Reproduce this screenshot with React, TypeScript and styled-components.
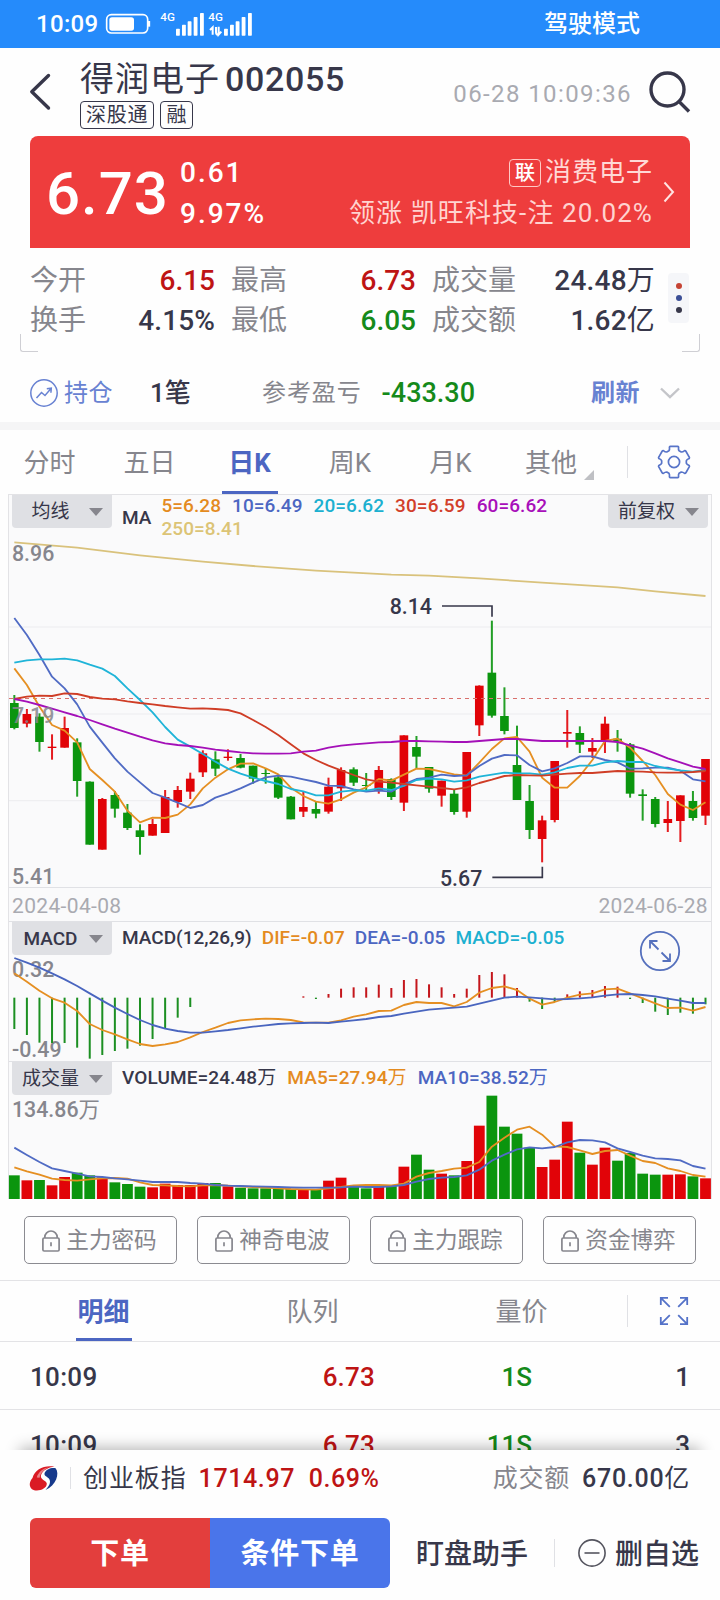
import React from "react";
import styled, { createGlobalStyle, css } from "styled-components";

const INK = "#37374a";
const GRAY = "#86868d";
const PALE = "#a9aab1";
const BLUE = "#4c66c2";
const SOFT_BLUE = "#6882d2";
const RED = "#be1414";
const GREEN = "#158a1a";
const UP = "#e10308";
const DOWN = "#0b950e";
const ORANGE = "#e48b1f";
const CYAN = "#1cb0d0";
const LINE = "#e3e3e6";
const MEDIUM = 480;

const Global = createGlobalStyle`
  * { box-sizing: border-box; }
  html, body { margin: 0; padding: 0; background: #fefefe; }
  body {
    width: 720px;
    height: 1600px;
    overflow: hidden;
    font-family: Roboto, "Noto Sans CJK SC", sans-serif;
    color: ${INK};
  }
  svg { display: block; overflow: visible; }
`;

interface TypeProps {
  $size: number;
  $weight?: number;
  $color?: string;
  $gap?: number;
}
const type = css<TypeProps>`
  font-size: ${(p) => p.$size}px;
  font-weight: ${(p) => p.$weight ?? 400};
  color: ${(p) => p.$color ?? INK};
  letter-spacing: ${(p) => p.$gap ?? 0}px;
  white-space: pre;
`;
const Label = styled.span<TypeProps>`
  ${type}
  line-height: 1.4;
`;
const Unit = styled.span`
  font-weight: 400;
`;

const Screen = styled.main`
  display: flex;
  flex-direction: column;
  width: 720px;
  height: 1600px;
  overflow: hidden;
`;

/* ---------- status bar ---------- */
const StatusBar = styled.header`
  display: flex;
  align-items: center;
  flex: none;
  height: 48px;
  padding: 2px 80px 0 36px;
  background: #258bfb;
`;
const StatusGlyphs = styled.svg`
  margin: 0 auto 2px 7px;
`;

/* ---------- title ---------- */
const TitleBar = styled.section`
  display: flex;
  flex: none;
  height: 88px;
  padding: 0 30px;
`;
const BackIcon = styled.svg`
  margin-top: 25px;
`;
const TitleBlock = styled.div`
  display: flex;
  flex-direction: column;
  margin-left: 28px;
  padding-top: 9px;
`;
const Name = styled.h1`
  display: flex;
  gap: 5px;
  margin: 0;
  height: 44px;
  line-height: 44px;
  font-size: 34px;
  letter-spacing: 1px;
  font-weight: 400;
`;
const Code = styled.span`
  font-weight: ${MEDIUM};
  letter-spacing: 0.7px;
`;
const Tags = styled.div`
  display: flex;
  gap: 6px;
`;
const Tag = styled.span<{ $light?: boolean }>`
  height: 28px;
  padding: 0 5px;
  border: 1px solid ${(p) => (p.$light ? "#ffc9c5" : INK)};
  border-radius: 4px;
  font-size: 20px;
  font-weight: ${(p) => (p.$light ? 500 : 400)};
  color: ${(p) => (p.$light ? "#fff" : INK)};
  line-height: 26px;
  letter-spacing: ${(p) => (p.$light ? 0 : 0.8)}px;
`;
const Stamp = styled.time`
  ${type}
  margin-left: auto;
  margin-right: 17px;
  line-height: 92px;
`;
const SearchIcon = styled.svg`
  margin-top: 23px;
`;

/* ---------- quote card ---------- */
const QuoteCard = styled.section`
  display: flex;
  align-items: center;
  flex: none;
  height: 112px;
  margin: 0 30px;
  padding: 0 15px 0 16px;
  border-radius: 8px 8px 0 0;
  background: #ee3d3d;
  color: #fff;
`;
const Price = styled.strong`
  width: 134px;
  font-size: 60px;
  font-weight: 500;
  line-height: 60px;
  letter-spacing: 1px;
  padding-top: 4px;
`;
const Stack = styled.div<{ $end?: boolean }>`
  display: flex;
  flex-direction: column;
  padding-top: 2px;
  align-items: ${(p) => (p.$end ? "flex-end" : "flex-start")};
  margin-left: ${(p) => (p.$end ? "auto" : "0")};
  margin-right: ${(p) => (p.$end ? "10px" : "0")};
`;
const StackLine = styled.div<TypeProps>`
  ${type}
  display: flex;
  align-items: center;
  gap: 4px;
  height: 41px;
  line-height: 41px;
`;
const Percent = styled.span`
  font-weight: 440;
`;

/* ---------- stats ---------- */
const Stats = styled.section`
  display: flex;
  position: relative;
  flex: none;
  height: 104px;
  margin: 0 20px;
  padding: 12px 10px 0;
`;
const StatGrid = styled.dl`
  display: grid;
  grid-template-columns: 185px 16px 185px 16px 223px;
  grid-template-rows: 40px 40px;
  margin: 0;
  padding-top: 1px;
`;
const Stat = styled.div<{ $col: number }>`
  grid-column: ${(p) => p.$col};
  display: flex;
  justify-content: space-between;
  align-items: center;
  line-height: 40px;
`;
const Corner = styled.i<{ $right?: boolean }>`
  position: absolute;
  bottom: 0;
  ${(p) => (p.$right ? "right: 0; border-right: 1.5px solid #cfcfd4; border-bottom-right-radius: 3px;" : "left: 0; border-left: 1.5px solid #cfcfd4; border-bottom-left-radius: 3px;")}
  width: 18px;
  height: 18px;
  border-bottom: 1.5px solid #cfcfd4;
`;
const MorePill = styled.div`
  display: flex;
  flex-direction: column;
  align-items: center;
  justify-content: center;
  gap: 6px;
  width: 21px;
  height: 50px;
  margin: 13px 0 0 13px;
  border-radius: 4px;
  background: #f5f6f9;
`;
const Dot = styled.i<{ $c: string }>`
  width: 6px;
  height: 6px;
  border-radius: 50%;
  background: ${(p) => p.$c};
`;

/* ---------- holding row ---------- */
const Holding = styled.section`
  display: flex;
  align-items: center;
  flex: none;
  height: 70px;
  padding: 11px 40px 0 30px;
  & span { padding-top: 2px; }
`;
const HoldLink = styled.div`
  display: flex;
  align-items: center;
  gap: 6px;
  width: 120px;
`;
const HoldCount = styled.div`
  display: flex;
  width: 112px;
`;
const HoldProfit = styled.div`
  display: flex;
  align-items: center;
  gap: 20px;
`;
const HoldRefresh = styled.div`
  display: flex;
  align-items: center;
  gap: 20px;
  margin-left: auto;
`;
const Divider = styled.hr`
  flex: none;
  width: 100%;
  height: 8px;
  margin: 0;
  border: 0;
  background: #f5f5f6;
`;

/* ---------- tabs ---------- */
const TabBar = styled.nav<{ $h: number; $lined?: boolean }>`
  display: flex;
  flex: none;
  height: ${(p) => p.$h}px;
  ${(p) => p.$lined && `border-top: 1px solid ${LINE}; border-bottom: 1px solid ${LINE};`}
`;
const Tab = styled.div<{ $w: number; $on?: boolean }>`
  position: relative;
  display: flex;
  justify-content: center;
  align-items: center;
  width: ${(p) => p.$w}px;
  padding: 0 2px 4px 0;
  font-size: 26px;
  color: ${(p) => (p.$on ? BLUE : GRAY)};
  font-weight: ${(p) => (p.$on ? 700 : 400)};
  &::after {
    content: "";
    display: ${(p) => (p.$on ? "block" : "none")};
    position: absolute;
    bottom: 0;
    left: calc(50% - 28.5px);
    width: 56px;
    height: 3px;
    background: ${BLUE};
  }
`;
const MoreMark = styled.i`
  position: absolute;
  right: 8px;
  bottom: 14px;
  border-left: 10px solid transparent;
  border-bottom: 10px solid #bfc0c4;
`;
const TabTool = styled.div`
  display: flex;
  align-items: center;
  justify-content: center;
  flex: 1;
`;
const ToolRule = styled.i<{ $h: number; $m?: string }>`
  flex: none;
  align-self: center;
  width: 1px;
  height: ${(p) => p.$h}px;
  margin: ${(p) => p.$m ?? "0"};
  background: #e0e1e5;
`;

/* ---------- charts ---------- */
const ChartBox = styled.section`
  flex: none;
  height: 705px;
  margin: 0 8px;
  border: solid ${LINE};
  border-width: 1px 1px 0;
  background: #fafafb;
`;
const Panel = styled.div<{ $h: number }>`
  position: relative;
  height: ${(p) => p.$h}px;
  border-bottom: 1px solid #e0e1e5;
  &:last-child { border-bottom: 0; }
`;
const PanelHead = styled.div<{ $h: number }>`
  display: flex;
  align-items: flex-start;
  height: ${(p) => p.$h}px;
  padding: 0 3px;
`;
const Picker = styled.button<{ $latin?: boolean }>`
  display: flex;
  align-items: center;
  justify-content: space-between;
  flex: none;
  width: 100px;
  height: 33px;
  margin: 0;
  padding: 0 9px 0 0;
  border: 0;
  border-radius: 0 0 4px 4px;
  background: #dfe0e4;
  color: ${INK};
  font: ${(p) => (p.$latin ? 460 : 400)} 19px/34px Roboto, "Noto Sans CJK SC", sans-serif;
  & > span { flex: 1; text-align: center; white-space: nowrap; }
`;
const Caret = styled.i`
  border: 7.5px solid transparent;
  border-top: 8px solid ${GRAY};
  border-bottom: 0;
`;
const Legend = styled.div<{ $wide?: boolean }>`
  display: flex;
  gap: ${(p) => (p.$wide ? 11 : 10)}px;
  margin-left: 10px;
  font-size: 19px;
  font-weight: ${MEDIUM};
  letter-spacing: ${(p) => (p.$wide ? 0.1 : 0)}px;
  line-height: 32px;
`;
const MaTitle = styled.b`
  margin: 7px 10px 0 10px;
  font-size: 19px;
  font-weight: ${MEDIUM};
  line-height: 31px;
`;
const MaLegend = styled.div`
  display: flex;
  flex-wrap: wrap;
  column-gap: 11px;
  flex: 1;
  margin-top: -1px;
  font-size: 19px;
  font-weight: ${MEDIUM};
  letter-spacing: 0.08px;
  line-height: 23px;
`;
const Key = styled.span<{ $c: string }>`
  color: ${(p) => p.$c};
  white-space: nowrap;
`;
const DateRow = styled.div`
  display: flex;
  justify-content: space-between;
  align-items: center;
  height: 34px;
  padding: 4px 3px 0;
  border-bottom: 1px solid #e0e1e5;
`;
const ExpandButton = styled.svg`
  position: absolute;
  top: 8px;
  right: 30px;
`;
const AxisText = styled.text<{ $dark?: boolean }>`
  font: ${(p) => (p.$dark ? MEDIUM : 460)} 64px Roboto, "Noto Sans CJK SC", sans-serif;
  fill: ${(p) => (p.$dark ? INK : GRAY)};
`;

/* ---------- locked indicators ---------- */
const LockRow = styled.section`
  display: grid;
  grid-template-columns: repeat(4, 1fr);
  gap: 20px;
  flex: none;
  height: 81px;
  padding: 17px 24px 16px;
`;
const LockButton = styled.button`
  display: flex;
  align-items: center;
  justify-content: center;
  gap: 6px;
  padding: 1px 2px 0 0;
  border: 1px solid #8b8b91;
  border-radius: 5px;
  background: transparent;
  color: ${GRAY};
  font: 400 22.6px/42px Roboto, "Noto Sans CJK SC", sans-serif;
`;

/* ---------- trades ---------- */
const Trades = styled.section`
  flex: none;
  height: 108px;
  overflow: hidden;
`;
const Trade = styled.div`
  display: grid;
  grid-template-columns: 130px 215px 157px 158px;
  height: 68px;
  padding: 0 30px;
  border-bottom: 1px solid ${LINE};
  line-height: 70px;
  & > :nth-child(n + 2) { text-align: right; }
`;
const TradeCell = styled.span<TypeProps>`
  ${type}
`;

/* ---------- footer ---------- */
const Footer = styled.footer`
  position: relative;
  flex: 1;
  background: #fefefe;
  box-shadow: 0 -22px 14px -20px rgba(0, 0, 0, 0.3);
`;
const IndexRow = styled.div`
  display: flex;
  align-items: center;
  height: 56px;
  padding: 0 30px;
`;
const IndexName = styled.div`
  margin: 0 12px 0 12px;
`;
const IndexMoney = styled.div`
  display: flex;
  gap: 12px;
  margin-left: auto;
`;
const Actions = styled.div`
  display: flex;
  align-items: center;
  height: 70px;
  margin-top: 12px;
  padding: 0 20px 0 30px;
`;
const Order = styled.button<{ $bg: string; $r: string }>`
  flex: none;
  width: 180px;
  height: 70px;
  padding: 2px 0 0;
  border: 0;
  border-radius: ${(p) => p.$r};
  background: ${(p) => p.$bg};
  color: #fff;
  font: 700 29px/68px Roboto, "Noto Sans CJK SC", sans-serif;
  letter-spacing: 0.8px;
`;
const ActionLink = styled.div<{ $first?: boolean }>`
  display: flex;
  align-items: center;
  flex: none;
  gap: 9px;
  margin-left: ${(p) => (p.$first ? 26 : 0)}px;
  & span { padding-top: 3px; }
`;

/* ---------- chart data: three chart units per pixel ---------- */
const STEP = 37.7;
const X0 = 43;
const xAt = (i: number) => X0 + i * STEP;
const points = (ys: number[]) => ys.map((y, i) => `${xAt(i).toFixed(1)},${y}`).join(" ");

// [colour, body top, body bottom, wick top, wick bottom]
type Candle = [string, number, number, number, number];
const candles: Candle[] = [
  ["g", 669, 744, 645, 748], ["r", 702, 731, 687, 742], ["g", 710, 786, 700, 815], ["r", 800, 804, 763, 839],
  ["r", 744, 803, 710, 803], ["g", 787, 903, 775, 950], ["g", 905, 1094, 904, 1094], ["r", 957, 1109, 954, 1109],
  ["g", 945, 986, 933, 1013], ["g", 998, 1044, 972, 1050], ["g", 1051, 1071, 1033, 1124], ["r", 1032, 1067, 1017, 1067],
  ["r", 951, 1059, 930, 1059], ["r", 930, 966, 918, 983], ["r", 896, 935, 878, 957], ["r", 820, 877, 811, 891],
  ["g", 838, 866, 814, 888], ["r", 830, 834, 808, 842], ["g", 834, 863, 822, 865], ["g", 857, 896, 857, 911],
  ["g", 879, 882, 865, 911], ["g", 892, 953, 887, 957], ["g", 950, 1018, 948, 1018], ["r", 981, 995, 933, 1011],
  ["g", 987, 1001, 965, 1015], ["r", 920, 995, 893, 1001], ["r", 870, 925, 862, 963], ["g", 868, 908, 862, 918],
  ["g", 915, 918, 879, 930], ["r", 870, 933, 858, 941], ["g", 897, 951, 895, 960], ["r", 766, 968, 766, 993],
  ["g", 801, 830, 768, 865], ["g", 861, 926, 861, 938], ["r", 902, 947, 902, 980], ["g", 941, 996, 930, 1004],
  ["r", 816, 995, 816, 1013], ["r", 617, 736, 616, 768], ["g", 578, 707, 422, 713], ["g", 708, 753, 622, 763],
  ["g", 855, 960, 737, 960], ["g", 963, 1050, 915, 1077], ["r", 1021, 1077, 1007, 1147], ["r", 843, 1020, 843, 1027],
  ["r", 756, 761, 690, 803], ["g", 759, 794, 739, 819], ["r", 804, 815, 774, 834], ["r", 731, 785, 710, 819],
  ["g", 776, 784, 750, 815], ["g", 793, 941, 789, 953], ["g", 943, 948, 928, 1022], ["g", 957, 1032, 951, 1042],
  ["r", 1017, 1029, 963, 1056], ["r", 946, 1023, 946, 1086], ["g", 963, 1014, 933, 1022], ["r", 837, 1007, 837, 1035],
];

const ma5 = [565, 615, 680, 735, 752, 787, 867, 900, 935, 992, 1027, 1013, 1014, 1004, 973, 925, 893, 868, 851, 850, 865, 883, 923, 948, 965, 971, 958, 938, 922, 897, 902, 884, 866, 867, 875, 883, 887, 848, 807, 775, 771, 815, 893, 923, 923, 888, 840, 783, 776, 803, 843, 885, 942, 974, 990, 967];
const ma10 = [414, 465, 525, 590, 625, 673, 740, 788, 835, 875, 907, 939, 953, 968, 984, 975, 953, 940, 925, 908, 892, 887, 890, 898, 906, 917, 918, 928, 935, 932, 935, 913, 897, 893, 884, 888, 886, 858, 836, 825, 826, 855, 874, 865, 849, 829, 829, 840, 847, 866, 865, 863, 863, 872, 898, 904];
const ma20 = [548, 541, 538, 538, 536, 541, 554, 566, 588, 625, 660, 697, 741, 779, 800, 822, 845, 866, 881, 893, 903, 912, 927, 934, 946, 946, 935, 931, 932, 925, 930, 918, 900, 896, 898, 905, 901, 890, 884, 878, 880, 880, 884, 877, 864, 857, 857, 847, 843, 846, 846, 858, 866, 871, 875, 870];
const ma30 = [657, 650, 647, 648, 640, 642, 651, 656, 658, 664, 669, 673, 678, 682, 686, 685, 687, 690, 700, 720, 741, 765, 793, 820, 840, 857, 871, 885, 898, 905, 908, 912, 916, 920, 924, 928, 922, 909, 899, 888, 885, 886, 887, 884, 881, 879, 879, 876, 873, 874, 875, 877, 878, 878, 876, 873];
const ma60 = [657, 665, 675, 686, 697, 708, 720, 733, 746, 758, 770, 781, 790, 795, 798, 803, 809, 813, 817, 820, 821, 821, 820, 815, 812, 803, 797, 793, 790, 787, 786, 783, 783, 784, 785, 786, 786, 783, 780, 777, 777, 780, 783, 783, 783, 783, 783, 783, 786, 796, 806, 820, 835, 847, 860, 867];
const ma250: [number, number][] = [[0, 187], [5, 203], [10, 226], [15, 245], [19, 258], [24, 272], [30, 284], [33, 287], [37, 295], [42, 308], [48, 322], [51, 334], [55, 348]];

const MACD_ZERO = 263;
const macdBars: [number, string, number][] = [
  [0, "g", 357], [1, "g", 375], [2, "g", 398], [3, "g", 399], [4, "g", 399], [5, "g", 413], [6, "g", 446], [7, "g", 435],
  [8, "g", 423], [9, "g", 416], [10, "g", 407], [11, "g", 387], [12, "g", 356], [13, "g", 323], [14, "g", 291],
  [23, "r", 259], [24, "g", 267], [25, "r", 252], [26, "r", 236], [27, "r", 232], [28, "r", 232], [29, "r", 224],
  [30, "r", 234], [31, "r", 210], [32, "r", 207], [33, "r", 223], [34, "r", 232], [35, "r", 252], [36, "r", 236],
  [37, "r", 195], [38, "r", 186], [39, "r", 193], [40, "r", 234], [41, "g", 275], [42, "g", 297], [43, "g", 276],
  [44, "r", 253], [45, "r", 244], [46, "r", 240], [47, "r", 228], [48, "r", 230], [49, "g", 267], [50, "g", 279],
  [51, "g", 305], [52, "g", 315], [53, "g", 308], [54, "g", 311], [55, "g", 283],
];
const dif = [190, 215, 242, 265, 278, 303, 342, 360, 373, 388, 402, 408, 403, 396, 382, 366, 353, 339, 331, 328, 326, 327, 330, 337, 338, 338, 331, 320, 313, 303, 302, 285, 276, 279, 279, 289, 276, 248, 234, 229, 240, 266, 284, 276, 263, 254, 250, 238, 236, 250, 265, 280, 294, 293, 302, 291];
const dea = [144, 158, 173, 190, 208, 228, 250, 272, 293, 312, 330, 345, 356, 363, 368, 368, 364, 360, 355, 350, 346, 342, 340, 339, 338, 339, 335, 331, 327, 321, 318, 311, 305, 299, 296, 293, 290, 281, 272, 263, 260, 262, 265, 268, 267, 265, 262, 257, 253, 252, 255, 259, 266, 272, 279, 279];

const VOL_BASE = 868;
const volumes = [797, 812, 811, 827, 802, 789, 797, 803, 818, 823, 831, 833, 822, 826, 826, 820, 820, 830, 834, 836, 836, 836, 838, 838, 841, 813, 804, 832, 836, 828, 828, 771, 735, 780, 792, 797, 754, 648, 558, 651, 672, 714, 772, 750, 636, 729, 765, 714, 753, 730, 792, 795, 795, 794, 800, 806];
const volMa5 = [773, 785, 795, 807, 811, 813, 809, 806, 805, 807, 818, 826, 827, 829, 830, 827, 826, 828, 830, 832, 834, 836, 838, 839, 840, 836, 832, 827, 826, 826, 827, 822, 801, 790, 784, 777, 774, 757, 711, 684, 660, 651, 675, 710, 712, 722, 733, 724, 721, 738, 754, 760, 776, 784, 796, 801];
const volMa10 = [714, 736, 757, 776, 784, 792, 800, 802, 806, 809, 813, 817, 817, 817, 820, 822, 826, 828, 829, 830, 831, 832, 833, 834, 834, 834, 833, 831, 832, 832, 830, 826, 816, 808, 804, 802, 797, 780, 753, 735, 719, 713, 716, 712, 698, 691, 692, 698, 716, 727, 738, 746, 748, 752, 769, 777];

const tone = (c: string) => (c === "r" ? UP : DOWN);
const Curve = ({ ys, color }: { ys: number[]; color: string }) => (
  <polyline points={points(ys)} fill="none" stroke={color} strokeWidth={5.5} strokeLinejoin="round" />
);

function PriceChart() {
  return (
    <svg width={702} height={348} viewBox="27 177 2106 1044">
      {[441, 702, 962].map((y) => (
        <line key={y} x1={27} x2={2133} y1={y} y2={y} stroke="#ececef" strokeWidth={3} />
      ))}
      {candles.map(([c, t, b, wt, wb], i) => (
        <g key={i} fill={tone(c)}>
          <rect x={xAt(i) - 3} width={6} y={wt} height={wb - wt} opacity={0.9} />
          <rect x={xAt(i) - 13} width={26} y={t} height={b - t} />
        </g>
      ))}
      <line x1={27} x2={2133} y1={655.5} y2={655.5} stroke="#d9706c" strokeWidth={3} strokeDasharray="12 12" />
      <Curve ys={ma5} color="#e58f22" />
      <Curve ys={ma10} color="#506bc4" />
      <Curve ys={ma20} color="#1fb4d8" />
      <Curve ys={ma30} color="#cf3d26" />
      <Curve ys={ma60} color="#a410b8" />
      <polyline points={ma250.map(([i, y]) => `${xAt(i)},${y}`).join(" ")} fill="none" stroke="#d9c27c" strokeWidth={5.5} />
      <AxisText x={36} y={242}>8.96</AxisText>
      <AxisText x={36} y={729} opacity={0.85}>7.19</AxisText>
      <AxisText x={36} y={1211}>5.41</AxisText>
      <AxisText $dark x={1169} y={402}>8.14</AxisText>
      <AxisText $dark x={1320} y={1217}>5.67</AxisText>
      <path d="M1326 378H1476V410M1477 1192H1627V1160" fill="none" stroke={INK} strokeWidth={5} />
    </svg>
  );
}

function MacdChart() {
  return (
    <svg width={702} height={106} viewBox="27 135 2106 318">
      <AxisText x={36} y={200}>0.32</AxisText>
      <AxisText x={36} y={440}>-0.49</AxisText>
      {macdBars.map(([i, c, y]) => (
        <rect key={i} x={xAt(i) - 3} width={6} y={Math.min(y, MACD_ZERO)} height={Math.abs(y - MACD_ZERO)} fill={c === "r" ? "#c4161c" : "#1c8f22"} />
      ))}
      <Curve ys={dif} color="#e58f22" />
      <Curve ys={dea} color="#4965bf" />
    </svg>
  );
}

function VolumeChart() {
  return (
    <svg width={702} height={104} viewBox="27 556 2106 312">
      <AxisText x={36} y={622}>134.86<tspan fontWeight={400}>万</tspan></AxisText>
      {volumes.map((y, i) => (
        <rect key={i} x={xAt(i) - 16.2} width={32.4} y={y} height={VOL_BASE - y} fill={tone(candles[i][0])} />
      ))}
      <Curve ys={volMa5} color="#e58f22" />
      <Curve ys={volMa10} color="#506bc4" />
    </svg>
  );
}

/* ---------- icons ---------- */
function StatusIcons() {
  const bars = [[0, 87], [18, 75], [35, 65], [53, 52], [72, 40]];
  return (
    <StatusGlyphs width={150} height={26} viewBox="315 34 450 78">
      <rect x={320} y={45} width={123} height={55} rx={14} fill="none" stroke="#fff" strokeWidth={5} />
      <rect x={328} y={53} width={74} height={40} rx={8} fill="#fff" />
      <path d="M447 64v17" stroke="#fff" strokeWidth={7} />
      <g fill="#fff" fontFamily="Roboto" fontSize={35} fontWeight={500}>
        <text x={481} y={65}>4G</text>
        <text x={625} y={65}>4G</text>
      </g>
      {[528, 672].map((x) => bars.map(([dx, y]) => <rect key={x + dx} x={x + dx} y={y} width={11.5} height={108 - y} rx={2} fill="#fff" />))}
      <path d="M630 91l8-8v22M656 81v24l8-9M648 82v16q0 8 8 8" fill="none" stroke="#fff" strokeWidth={6} />
    </StatusGlyphs>
  );
}

const gearPath = (() => {
  const at = (r: number, deg: number) => {
    const a = (deg * Math.PI) / 180;
    return `${(17 + r * Math.cos(a)).toFixed(2)} ${(17 + r * Math.sin(a)).toFixed(2)}`;
  };
  let d = "";
  for (let k = 0; k < 6; k++) {
    const c = -90 + 60 * k;
    d += `${k ? "L" : "M"}${at(12.4, c - 24)}Q${at(13, c - 19)} ${at(15.6, c - 17)}Q${at(16.3, c - 15)} ${at(16, c - 12)}`;
    d += `L${at(16, c + 12)}Q${at(16.3, c + 15)} ${at(15.6, c + 17)}Q${at(13, c + 19)} ${at(12.4, c + 24)}`;
  }
  return d + "Z";
})();
const Gear = () => (
  <svg width={34} height={34} viewBox="0 0 34 34" fill="none" stroke="#5874c8" strokeWidth={1.7} strokeLinejoin="round">
    <path d={gearPath} />
    <circle cx={17} cy={17} r={5.6} />
  </svg>
);
const Lock = () => (
  <svg width={18} height={22} viewBox="0 0 18 22" fill="none" stroke={GRAY} strokeWidth={1.7}>
    <rect x={0.9} y={8} width={16.2} height={13} rx={1.2} />
    <path d="M2.8 8V7.2a6.2 6.2 0 0 1 12.4 0V8" />
    <path d="M9 12.2v4" />
  </svg>
);
const Corners = () => (
  <svg width={30} height={30} viewBox="0 0 30 30" fill="none" stroke="#5472c8" strokeWidth={1.8}>
    <path d="M1.8 9V1.8H9M1.8 1.8l9 9M21 1.8h7.2V9M28.2 1.8l-9 9M1.8 21v7.2H9M1.8 28.2l9-9M21 28.2h7.2V21M28.2 28.2l-9-9" />
  </svg>
);
const Logo = () => (
  <svg width={28} height={25} viewBox="0 0 28 25">
    <path d="M24.5 0.6C14 -1 5 3 2.5 12C-0.5 15.5 -1.500 20 2 23.200C6.500 26.300 17 23.500 16.800 17.500C16.500 14 9.800 14 11 9.200C12.500 4.500 18 1.500 24.500 0.600Z" fill="#da1a24" />
    <path d="M25.6 2.2C30 7.5 26 19.5 15.5 23.9C20.5 19 21 14.8 18.6 12.3C16.8 10.5 13.8 9.8 14.6 7C16 3.5 21 1.3 25.6 2.2Z" fill="#173a8c" />
    <path d="M6.8 11.5C8 6.5 13 2.3 19 1.3C14 3.3 10.5 7 9.6 11.8Z" fill="#fff" opacity={0.45} />
  </svg>
);

export default function App() {
  return (
    <Screen>
      <Global />
      <StatusBar>
        <Label $size={24} $color="#fff" $weight={MEDIUM} $gap={0.3}>10:09</Label>
        <StatusIcons />
        <Label $size={24} $color="#fff" $weight={500}>驾驶模式</Label>
      </StatusBar>

      <TitleBar>
        <BackIcon width={22} height={38} viewBox="0 0 22 38" fill="none" stroke={INK} strokeWidth={3.4} strokeLinecap="round" strokeLinejoin="round">
          <path d="M18.5 2.5L1.8 18.8L18.5 35" />
        </BackIcon>
        <TitleBlock>
          <Name>得润电子<Code>002055</Code></Name>
          <Tags>
            <Tag>深股通</Tag>
            <Tag>融</Tag>
          </Tags>
        </TitleBlock>
        <Stamp $size={24} $color={PALE} $gap={1.4} $weight={450}>06-28 10:09:36</Stamp>
        <SearchIcon width={41} height={42} viewBox="0 0 41 42" fill="none" stroke={INK} strokeWidth={3.4}>
          <circle cx={18.5} cy={18.5} r={16.5} />
          <path d="M29.5 30L40 40.5" />
        </SearchIcon>
      </TitleBar>

      <QuoteCard>
        <Price>6.73</Price>
        <Stack>
          <StackLine $size={28} $color="#fff" $gap={2} $weight={MEDIUM}>0.61</StackLine>
          <StackLine $size={28} $color="#fff" $gap={2} $weight={MEDIUM}>9.97%</StackLine>
        </Stack>
        <Stack $end>
          <StackLine $size={26} $color="#ffd9d6" $gap={1}><Tag $light>联</Tag>消费电子</StackLine>
          <StackLine $size={26} $color="#ffd3d0" $gap={1.1}><span>领涨 凯旺科技-注 <Percent>20.02%</Percent></span></StackLine>
        </Stack>
        <svg width={12} height={22} viewBox="0 0 12 22" fill="none" stroke="#ffe3e1" strokeWidth={2}>
          <path d="M1.5 1.5L10 11L1.5 20.5" />
        </svg>
      </QuoteCard>

      <Stats>
        <StatGrid>
          <Stat $col={1}><Label $size={28} $color={GRAY}>今开</Label><Label $size={28} $weight={500} $color={RED}>6.15</Label></Stat>
          <Stat $col={3}><Label $size={28} $color={GRAY}>最高</Label><Label $size={28} $weight={500} $color={RED}>6.73</Label></Stat>
          <Stat $col={5}><Label $size={28} $color={GRAY}>成交量</Label><Label $size={28} $weight={MEDIUM} $gap={0.2}>24.48<Unit>万</Unit></Label></Stat>
          <Stat $col={1}><Label $size={28} $color={GRAY}>换手</Label><Label $size={28} $weight={MEDIUM} $gap={0.1}>4.15%</Label></Stat>
          <Stat $col={3}><Label $size={28} $color={GRAY}>最低</Label><Label $size={28} $weight={500} $color={GREEN}>6.05</Label></Stat>
          <Stat $col={5}><Label $size={28} $color={GRAY}>成交额</Label><Label $size={28} $weight={MEDIUM} $gap={0.2}>1.62<Unit>亿</Unit></Label></Stat>
        </StatGrid>
        <MorePill><Dot $c="#c54334" /><Dot $c="#3b4f96" /><Dot $c={INK} /></MorePill>
        <Corner /><Corner $right />
      </Stats>

      <Holding>
        <HoldLink>
          <svg width={28} height={28} viewBox="0 0 28 28" fill="none" stroke={SOFT_BLUE} strokeWidth={1.5}>
            <circle cx={14} cy={14} r={13.2} />
            <path d="M6.5 19L11.5 13.5L15 16.5L21 9.5M16.8 9.8l4.5 -.6l-.4 4.5" />
          </svg>
          <Label $size={24} $color={SOFT_BLUE} $gap={0.6}>持仓</Label>
        </HoldLink>
        <HoldCount><Label $size={26} $weight={MEDIUM}>1笔</Label></HoldCount>
        <HoldProfit>
          <Label $size={24} $color={GRAY} $gap={0.9}>参考盈亏</Label>
          <Label $size={27} $weight={500} $color={GREEN}>-433.30</Label>
        </HoldProfit>
        <HoldRefresh>
          <Label $size={24} $weight={700} $color={SOFT_BLUE} $gap={0.5}>刷新</Label>
          <svg width={20} height={12} viewBox="0 0 20 12" fill="none" stroke="#c4c5c9" strokeWidth={2.4}>
            <path d="M1 1.5L10 10L19 1.5" />
          </svg>
        </HoldRefresh>
      </Holding>
      <Divider />

      <TabBar $h={64}>
        <Tab $w={101}>分时</Tab>
        <Tab $w={99}>五日</Tab>
        <Tab $w={101} $on>日K</Tab>
        <Tab $w={100}>周K</Tab>
        <Tab $w={101}>月K</Tab>
        <Tab $w={100}>其他<MoreMark /></Tab>
        <ToolRule $h={32} $m="0 0 0 25px" />
        <TabTool><Gear /></TabTool>
      </TabBar>

      <ChartBox>
        <Panel $h={393}>
          <PanelHead $h={44}>
            <Picker><span>均线</span><Caret /></Picker>
            <MaTitle>MA</MaTitle>
            <MaLegend>
              <Key $c={ORANGE}>5=6.28</Key>
              <Key $c={BLUE}>10=6.49</Key>
              <Key $c={CYAN}>20=6.62</Key>
              <Key $c="#d23f2a">30=6.59</Key>
              <Key $c="#a80fba">60=6.62</Key>
              <Key $c="#dcc476">250=8.41</Key>
            </MaLegend>
            <Picker><span>前复权</span><Caret /></Picker>
          </PanelHead>
          <PriceChart />
        </Panel>
        <DateRow>
          <Label $size={21} $color={PALE} $gap={0.35} $weight={450}>2024-04-08</Label>
          <Label $size={21} $color={PALE} $gap={0.35} $weight={450}>2024-06-28</Label>
        </DateRow>
        <Panel $h={140}>
          <PanelHead $h={33}>
            <Picker $latin><span>MACD</span><Caret /></Picker>
            <Legend>
              <Key $c={INK}>MACD(12,26,9)</Key>
              <Key $c={ORANGE}>DIF=-0.07</Key>
              <Key $c={BLUE}>DEA=-0.05</Key>
              <Key $c={CYAN}>MACD=-0.05</Key>
            </Legend>
          </PanelHead>
          <MacdChart />
          <ExpandButton width={42} height={42} viewBox="0 0 42 42" fill="none" stroke="#5570bd" strokeWidth={1.8}>
            <circle cx={21} cy={21} r={19.2} />
            <path d="M11 18.5V11H18.5M11 11l8.5 8.5M31 23.5V31H23.5M31 31l-8.5-8.5" />
          </ExpandButton>
        </Panel>
        <Panel $h={137}>
          <PanelHead $h={33}>
            <Picker><span>成交量</span><Caret /></Picker>
            <Legend $wide>
              <Key $c={INK}>VOLUME=24.48<Unit>万</Unit></Key>
              <Key $c={ORANGE}>MA5=27.94<Unit>万</Unit></Key>
              <Key $c={BLUE}>MA10=38.52<Unit>万</Unit></Key>
            </Legend>
          </PanelHead>
          <VolumeChart />
        </Panel>
      </ChartBox>

      <LockRow>
        {["主力密码", "神奇电波", "主力跟踪", "资金博弈"].map((name) => (
          <LockButton key={name}><Lock />{name}</LockButton>
        ))}
      </LockRow>

      <TabBar $h={62} $lined>
        <Tab $w={209} $on>明细</Tab>
        <Tab $w={209}>队列</Tab>
        <Tab $w={209}>量价</Tab>
        <ToolRule $h={32} />
        <TabTool><Corners /></TabTool>
      </TabBar>

      <Trades>
        {[["1S", "1"], ["11S", "3"]].map(([lots, count]) => (
          <Trade key={lots}>
            <TradeCell $size={26} $weight={MEDIUM} $gap={0.3}>10:09</TradeCell>
            <TradeCell $size={26} $weight={MEDIUM} $color={RED} $gap={0.2}>6.73</TradeCell>
            <TradeCell $size={26} $weight={MEDIUM} $color={GREEN}>{lots}</TradeCell>
            <TradeCell $size={26} $weight={MEDIUM}>{count}</TradeCell>
          </Trade>
        ))}
      </Trades>

      <Footer>
        <IndexRow>
          <Logo />
          <ToolRule $h={22} $m="0 0 0 12px" />
          <IndexName><Label $size={25} $gap={0.9}>创业板指</Label></IndexName>
          <Label $size={25} $weight={MEDIUM} $color={RED} $gap={0.6}>1714.97  0.69%</Label>
          <IndexMoney>
            <Label $size={25} $color={GRAY} $gap={0.8}>成交额</Label>
            <Label $size={25} $weight={MEDIUM} $gap={0.7}>670.00<Unit>亿</Unit></Label>
          </IndexMoney>
        </IndexRow>
        <Actions>
          <Order $bg="#e33e3d" $r="6px 0 0 6px">下单</Order>
          <Order $bg="#4a75ea" $r="0 6px 6px 0">条件下单</Order>
          <ActionLink $first><Label $size={28} $weight={500}>盯盘助手</Label></ActionLink>
          <ToolRule $h={28} $m="0 23px 0 26px" />
          <ActionLink>
            <svg width={28} height={28} viewBox="0 0 28 28" fill="none" stroke="#55555f" strokeWidth={1.6}>
              <circle cx={14} cy={14} r={13.1} />
              <path d="M6.5 14h15" />
            </svg>
            <Label $size={28} $weight={500}>删自选</Label>
          </ActionLink>
        </Actions>
      </Footer>
    </Screen>
  );
}
